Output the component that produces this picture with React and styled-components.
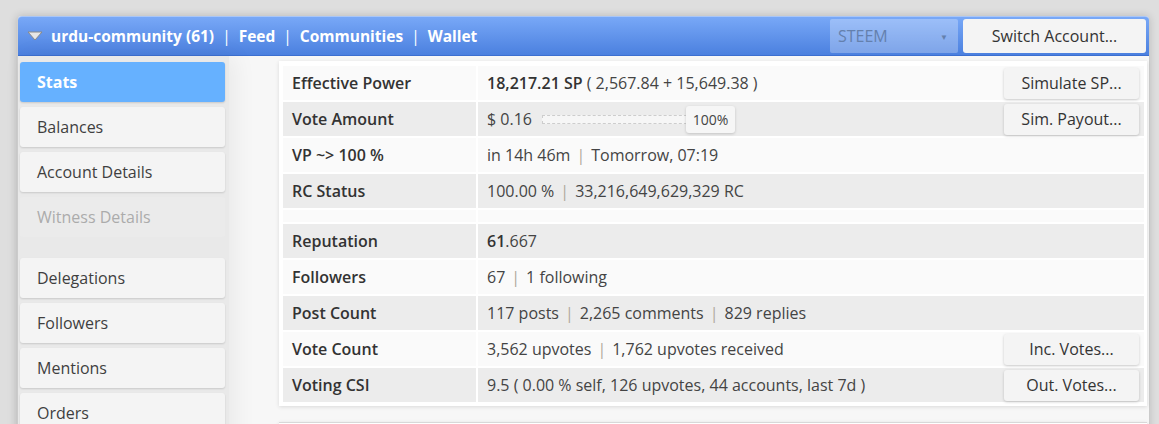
import React from "react";
import styled, { createGlobalStyle } from "styled-components";

const GlobalStyle = createGlobalStyle`
  html, body {
    margin: 0;
    padding: 0;
    background: #dedede;
    font-family: "Open Sans", "Liberation Sans", sans-serif;
    overflow: hidden;
  }
`

const Page = styled.div`
  padding: 16px 0 0 17px;
`

const Panel = styled.div`
  width: 1132px;
  background: #f7f7f7;
  border-radius: 4px 4px 0 0;
  box-shadow: 0 0 8px rgba(0, 0, 0, 0.18);
  border-left: 1px solid #cfcfcf;
  box-sizing: border-box;
`

const Header = styled.div`
  display: flex;
  align-items: center;
  height: 40px;
  box-sizing: border-box;
  padding: 0 3px 0 9px;
  border-radius: 4px 4px 0 0;
  background: linear-gradient(#78a8f7, #4b80df);
  border-top: 1px solid #a9c6f7;
  border-bottom: 1px solid #3c6fd0;
  color: #fff;
  font-size: 15.5px;
  font-weight: 700;
`

const Caret = styled.svg`
  width: 16px;
  height: 10px;
  margin-right: 8px;
`

const NavSep = styled.span`
  margin: 0 8px;
  font-weight: 400;
`

const Grow = styled.div`
  flex: 1;
`

const Select = styled.div`
  display: flex;
  align-items: center;
  justify-content: space-between;
  width: 128px;
  height: 34px;
  box-sizing: border-box;
  padding: 0 10px 0 8px;
  border-radius: 2px;
  background: rgba(255, 255, 255, 0.28);
  color: #6480ad;
  font-size: 16px;
  font-weight: 400;
`

const SelectArrow = styled.span`
  font-size: 8px;
`

const HeadButton = styled.button`
  width: 183px;
  height: 34px;
  margin-left: 5px;
  border: none;
  border-radius: 3px;
  background: #f4f4f4;
  color: #333;
  font-family: inherit;
  font-size: 16px;
`

const Body = styled.div`
  display: flex;
  align-items: flex-start;
`

const Sidebar = styled.div`
  display: flex;
  flex-direction: column;
  gap: 5px;
  width: 211px;
  min-height: 420px;
  box-sizing: border-box;
  padding: 6px 4px 6px 2px;
  background: #e9e9e9;
  box-shadow: 6px 0 22px rgba(0, 0, 0, 0.06);
`

const SideItem = styled.div`
  height: 40px;
  display: flex;
  align-items: center;
  padding-left: 17px;
  border-radius: 3px;
  font-size: 16px;
  background: ${p => p.$active ? "#66b1ff" : p.$disabled ? "#ebebeb" : "#f4f4f4"};
  color: ${p => p.$active ? "#fff" : p.$disabled ? "#ababab" : "#3f3f3f"};
  font-weight: ${p => p.$active ? 700 : 400};
  box-shadow: ${p => p.$disabled ? "none" : "0 1px 2px rgba(0, 0, 0, 0.14)"};
`

const SideSpacer = styled.div`
  height: 11px;
`

const Main = styled.div`
  flex: 1;
  padding: 5px 2px 0 50px;
`

const Card = styled.div`
  background: #fff;
  padding: 3px 1px 2px 2px;
  box-shadow: 0 1px 4px rgba(0, 0, 0, 0.12);
`

const StubCard = styled(Card)`
  margin-top: 16px;
  height: 100px;
  border-top: 1px solid #d8d8d8;
`

const Table = styled.table`
  width: 100%;
  border-collapse: separate;
  border-spacing: 2px;
  font-size: 16px;
`

const Row = styled.tr`
  background: ${p => p.$shade ? "#ececec" : "#fafafa"};
`

const Label = styled.td`
  width: 174px;
  height: 34px;
  padding: 0 10px 0 9px;
  color: #333;
  font-weight: 600;
`

const Value = styled.td`
  height: 34px;
  padding: 0 5px 0 9px;
  color: #444;
`

const SpacerCell = styled.td`
  height: 12px;
  padding: 0;
`

const Strong = styled.b`
  font-weight: 600;
  color: #333;
`

const Sep = styled.span`
  margin: 0 6px;
  color: #b0a89c;
`

const Line = styled.div`
  display: flex;
  align-items: center;
`

const RowButton = styled.button`
  margin-left: auto;
  width: 135px;
  height: 31px;
  border: none;
  border-radius: 3px;
  background: #f4f4f4;
  box-shadow: 0 1px 3px rgba(0, 0, 0, 0.2);
  color: #333;
  font-family: inherit;
  font-size: 16px;
`

const Slider = styled.div`
  position: relative;
  width: 193px;
  height: 27px;
  margin-left: 10px;
  display: flex;
  align-items: center;
`

const Track = styled.div`
  width: 148px;
  height: 7px;
  border: 1px dashed #cdcdcd;
  background: #f6f6f6;
`

const Handle = styled.div`
  position: absolute;
  right: 0;
  top: 0;
  width: 49px;
  height: 27px;
  display: flex;
  align-items: center;
  justify-content: center;
  border-radius: 3px;
  background: #f6f6f6;
  box-shadow: 0 1px 3px rgba(0, 0, 0, 0.18);
  color: #444;
  font-size: 14px;
`

const sideItems = [
  { name: "Stats", active: true },
  { name: "Balances" },
  { name: "Account Details" },
  { name: "Witness Details", disabled: true },
  { spacer: true },
  { name: "Delegations" },
  { name: "Followers" },
  { name: "Mentions" },
  { name: "Orders" },
]

const Parts = ({ items }) => (
  <>
    {items.map((it, i) => (
      <React.Fragment key={i}>
        {i > 0 && <Sep>|</Sep>}
        {it}
      </React.Fragment>
    ))}
  </>
)

export default function App() {
  return (
    <Page>
      <GlobalStyle />
      <Panel>
        <Header>
          <Caret viewBox="0 0 16 10">
            <polygon points="1,1 15,1 8,9" fill="#e6e6e6" stroke="#8a8a8a" strokeWidth="1" strokeLinejoin="round" />
          </Caret>
          <span>urdu-community (61)</span>
          <NavSep>|</NavSep>
          <span>Feed</span>
          <NavSep>|</NavSep>
          <span>Communities</span>
          <NavSep>|</NavSep>
          <span>Wallet</span>
          <Grow />
          <Select>
            <span>STEEM</span>
            <SelectArrow>▼</SelectArrow>
          </Select>
          <HeadButton>Switch Account...</HeadButton>
        </Header>
        <Body>
          <Sidebar>
            {sideItems.map((it, i) =>
              it.spacer ? <SideSpacer key={i} /> : (
                <SideItem key={i} $active={it.active} $disabled={it.disabled}>{it.name}</SideItem>
              )
            )}
          </Sidebar>
          <Main>
            <Card>
              <Table>
                <tbody>
                  <Row>
                    <Label>Effective Power</Label>
                    <Value>
                      <Line>
                        <span><Strong>18,217.21 SP</Strong> ( 2,567.84 + 15,649.38 )</span>
                        <RowButton>Simulate SP...</RowButton>
                      </Line>
                    </Value>
                  </Row>
                  <Row $shade>
                    <Label>Vote Amount</Label>
                    <Value>
                      <Line>
                        <span>$ 0.16</span>
                        <Slider>
                          <Track />
                          <Handle>100%</Handle>
                        </Slider>
                        <RowButton>Sim. Payout...</RowButton>
                      </Line>
                    </Value>
                  </Row>
                  <Row>
                    <Label>VP ~&gt; 100 %</Label>
                    <Value><Parts items={["in 14h 46m", "Tomorrow, 07:19"]} /></Value>
                  </Row>
                  <Row $shade>
                    <Label>RC Status</Label>
                    <Value><Parts items={["100.00 %", "33,216,649,629,329 RC"]} /></Value>
                  </Row>
                  <Row>
                    <SpacerCell />
                    <SpacerCell />
                  </Row>
                  <Row $shade>
                    <Label>Reputation</Label>
                    <Value><Strong>61</Strong>.667</Value>
                  </Row>
                  <Row>
                    <Label>Followers</Label>
                    <Value><Parts items={["67", "1 following"]} /></Value>
                  </Row>
                  <Row $shade>
                    <Label>Post Count</Label>
                    <Value><Parts items={["117 posts", "2,265 comments", "829 replies"]} /></Value>
                  </Row>
                  <Row>
                    <Label>Vote Count</Label>
                    <Value>
                      <Line>
                        <span><Parts items={["3,562 upvotes", "1,762 upvotes received"]} /></span>
                        <RowButton>Inc. Votes...</RowButton>
                      </Line>
                    </Value>
                  </Row>
                  <Row $shade>
                    <Label>Voting CSI</Label>
                    <Value>
                      <Line>
                        <span>9.5 ( 0.00 % self, 126 upvotes, 44 accounts, last 7d )</span>
                        <RowButton>Out. Votes...</RowButton>
                      </Line>
                    </Value>
                  </Row>
                </tbody>
              </Table>
            </Card>
            <StubCard />
          </Main>
        </Body>
      </Panel>
    </Page>
  );
}
